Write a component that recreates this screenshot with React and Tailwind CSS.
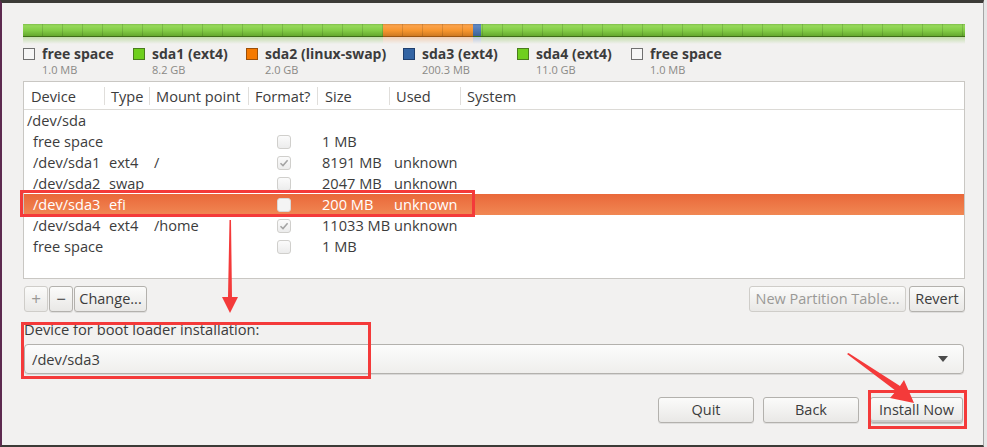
import React from "react";

const rows = [
  { dev: "/dev/sda", top: true },
  { dev: "free space", fmt: false, size: "1 MB" },
  { dev: "/dev/sda1", type: "ext4", mount: "/", fmt: true, size: "8191 MB", used: "unknown" },
  { dev: "/dev/sda2", type: "swap", fmt: false, size: "2047 MB", used: "unknown" },
  { dev: "/dev/sda3", type: "efi", fmt: false, size: "200 MB", used: "unknown", sel: true },
  { dev: "/dev/sda4", type: "ext4", mount: "/home", fmt: true, size: "11033 MB", used: "unknown" },
  { dev: "free space", fmt: false, size: "1 MB" },
];

const legend = [
  { label: "free space", size: "1.0 MB", sq: "bg-[#f6f6f6] border-[#707070]", w: "w-[110px]" },
  { label: "sda1 (ext4)", size: "8.2 GB", sq: "bg-[#6fcf1e] border-[#4a7d1c]", w: "w-[113px]" },
  { label: "sda2 (linux-swap)", size: "2.0 GB", sq: "bg-[#f57900] border-[#9c4f08]", w: "w-[157px]" },
  { label: "sda3 (ext4)", size: "200.3 MB", sq: "bg-[#3465a4] border-[#1f3f6e]", w: "w-[114px]" },
  { label: "sda4 (ext4)", size: "11.0 GB", sq: "bg-[#6fcf1e] border-[#4a7d1c]", w: "w-[114px]" },
  { label: "free space", size: "1.0 MB", sq: "bg-[#f6f6f6] border-[#707070]", w: "w-[110px]" },
];

function Check({ checked, sel }) {
  return (
    <div
      className={`w-[14px] h-[14px] rounded-[3px] border flex items-center justify-center ${
        sel ? "border-[#d8d8d8] bg-[#f4f4f4]" : "border-[#d0cfcc] bg-[linear-gradient(#fbfbfb,#ececec)]"
      }`}
    >
      {checked && (
        <svg width="10" height="10" viewBox="0 0 10 10">
          <path d="M1.5 5.2 L4 7.6 L8.6 2.2" fill="none" stroke="#a3a3a3" strokeWidth="1.5" />
        </svg>
      )}
    </div>
  );
}

function Btn({ children, className = "", disabled }) {
  return (
    <div
      className={`h-[26px] flex items-center justify-center rounded-[3px] border bg-[linear-gradient(#fbfbfa,#e9e8e6)] text-[14.5px] whitespace-nowrap ${
        disabled ? "border-[#cfcdc9] text-[#9a9996]" : "border-[#b3b1ad] text-[#3c3c3c] shadow-[0_1px_0_rgba(0,0,0,0.08)]"
      } ${className}`}
    >
      {children}
    </div>
  );
}

export default function App() {
  return (
    <div className="w-[987px] h-[447px] overflow-hidden bg-[#e6e6e6] font-['Open_Sans',sans-serif] text-[#3c3c3c] relative">
      <div className="w-[984px] h-[447px] bg-[#f2f1f0] border-t-[3px] border-t-[#3c3b37] border-l-[2px] border-l-[#5d2a4f] border-b-[2px] border-b-[#3c3b37] border-r border-r-[#a5a5a5] flex flex-col pl-[21px] pr-[18px]">
        {/* partition bar */}
        <div className="mt-[21px] w-[942px] relative">
          <div className="h-[13px] flex border-b border-b-[#3f6e18] relative">
            <div className="w-[360px] bg-[linear-gradient(#7fbf4a,#96d85a_15%,#82cc45_55%,#65a92e)]" />
            <div className="w-[90px] bg-[linear-gradient(#d98a3a,#fba24a_15%,#f6952e_55%,#cf7a22)] border-b border-b-[#9a5512] -mb-px" />
            <div className="w-[8px] bg-[linear-gradient(#4d73a8,#6289c2_15%,#4f78b3_55%,#3d6294)]" />
            <div className="flex-1 bg-[linear-gradient(#7fbf4a,#96d85a_15%,#82cc45_55%,#65a92e)]" />
            <div className="absolute inset-0 bg-[image:repeating-linear-gradient(90deg,transparent_0_19px,rgba(0,0,0,0.13)_19px_20px)]" />
          </div>
          <div className="h-[7px] flex opacity-40">
            <div className="w-[360px] bg-[linear-gradient(#7cbf45,transparent)]" />
            <div className="w-[90px] bg-[linear-gradient(#f0a060,transparent)]" />
            <div className="w-[8px] bg-[linear-gradient(#6a8cc0,transparent)]" />
            <div className="flex-1 bg-[linear-gradient(#7cbf45,transparent)]" />
          </div>
        </div>

        {/* legend */}
        <div className="flex mt-[2px] h-[30px]">
          {legend.map((l, i) => (
            <div key={i} className={`flex ${l.w}`}>
              <div className={`w-[12px] h-[12px] border mt-[2px] mr-[7px] ${l.sq}`} />
              <div className="flex flex-col">
                <div className="text-[14px] font-bold leading-[16px] text-[#3c3c3c] whitespace-nowrap">{l.label}</div>
                <div className="text-[11px] leading-[12px] mt-[2px] text-[#8a8986] whitespace-nowrap">{l.size}</div>
              </div>
            </div>
          ))}
        </div>

        {/* table */}
        <div className="mt-[5px] w-[942px] h-[198px] bg-white border border-[#c9c7c3] text-[14.6px]">
          <div className="flex h-[28px] border-b border-b-[#dcdad6] items-center text-[#3c3c3c]">
            <div className="w-[81px] pl-[7px] h-[18px] border-r border-r-[#e0dedb] leading-[18px]">Device</div>
            <div className="w-[45px] pl-[6px] h-[18px] border-r border-r-[#e0dedb] leading-[18px]">Type</div>
            <div className="w-[99px] pl-[6px] h-[18px] border-r border-r-[#e0dedb] leading-[18px] whitespace-nowrap">Mount point</div>
            <div className="w-[69px] pl-[6px] h-[18px] border-r border-r-[#e0dedb] leading-[18px]">Format?</div>
            <div className="w-[72px] pl-[7px] h-[18px] border-r border-r-[#e0dedb] leading-[18px]">Size</div>
            <div className="w-[71px] pl-[6px] h-[18px] border-r border-r-[#e0dedb] leading-[18px]">Used</div>
            <div className="flex-1 pl-[6px] h-[18px] leading-[18px]">System</div>
          </div>
          {rows.map((r, i) =>
            r.top ? (
              <div key={i} className="h-[21px] flex items-center pl-[3px]">{r.dev}</div>
            ) : (
              <div
                key={i}
                className={`h-[21px] flex items-center ${
                  r.sel ? "bg-[linear-gradient(#e9683a,#f18753)] text-white" : "text-[#3c3c3c]"
                }`}
              >
                <div className="w-[81px] pl-[9px] whitespace-nowrap">{r.dev}</div>
                <div className="w-[45px] pl-[4px]">{r.type}</div>
                <div className="w-[99px] pl-[4px]">{r.mount}</div>
                <div className="w-[69px] flex justify-center pl-[1px]">
                  <Check checked={r.fmt} sel={r.sel} />
                </div>
                <div className="w-[72px] pl-[4px] whitespace-nowrap">{r.size}</div>
                <div className="w-[71px] pl-[4px]">{r.used}</div>
                <div className="flex-1" />
              </div>
            )
          )}
        </div>

        {/* table buttons */}
        <div className="mt-[7px] flex w-[942px] pl-px">
          <Btn disabled className="w-[24px] text-[17px]">+</Btn>
          <Btn className="w-[24px] ml-px text-[17px]">−</Btn>
          <Btn className="w-[73px] ml-px">Change...</Btn>
          <div className="flex-1" />
          <Btn disabled className="w-[157px]">New Partition Table...</Btn>
          <Btn className="w-[56px] ml-[3px]">Revert</Btn>
        </div>

        {/* boot loader */}
        <div className="mt-[8px] pl-px text-[14.7px] leading-[18px]">Device for boot loader installation:</div>
        <div className="mt-[6px] ml-px w-[940px] h-[30px] rounded-[4px] border border-[#b3b1ad] bg-[linear-gradient(#fcfcfc,#efeeec)] shadow-[0_1px_0_rgba(0,0,0,0.1)] flex items-center pl-[7px] pr-[15px] text-[14.7px]">
          <div className="flex-1">/dev/sda3</div>
          <svg width="10" height="6" viewBox="0 0 10 6">
            <path d="M0 0 L10 0 L5 6 Z" fill="#4b4b4b" />
          </svg>
        </div>

        {/* bottom buttons */}
        <div className="mt-[23px] flex justify-end w-[942px] pr-[2px]">
          <Btn className="w-[96px]">Quit</Btn>
          <Btn className="w-[96px] ml-[9px]">Back</Btn>
          <Btn className="w-[93px] ml-[11px] border-[#8e8c88] shadow-[inset_0_-2px_0_rgba(0,0,0,0.12),0_1px_1px_rgba(0,0,0,0.2)]">Install Now</Btn>
        </div>
      </div>

      {/* annotations */}
      <div className="absolute left-[20px] top-[190px] w-[455px] h-[27px] border-[3px] border-[#f43a3a]" />
      <div className="absolute left-[21px] top-[322px] w-[350px] h-[57px] border-[3px] border-[#f43a3a]" />
      <div className="absolute left-[868px] top-[390px] w-[99px] h-[39px] border-[3px] border-[#f43a3a]" />
      <svg className="absolute left-0 top-0 pointer-events-none" width="987" height="447">
        <polygon points="229.5,220 231,220 232,297 238,297 230,313 222,297 228,297" fill="#f43a3a" />
        <polygon points="847,354 848.5,353 900,386 904,380 914,403 890,398 896,391" fill="#f43a3a" />
      </svg>
    </div>
  );
}
